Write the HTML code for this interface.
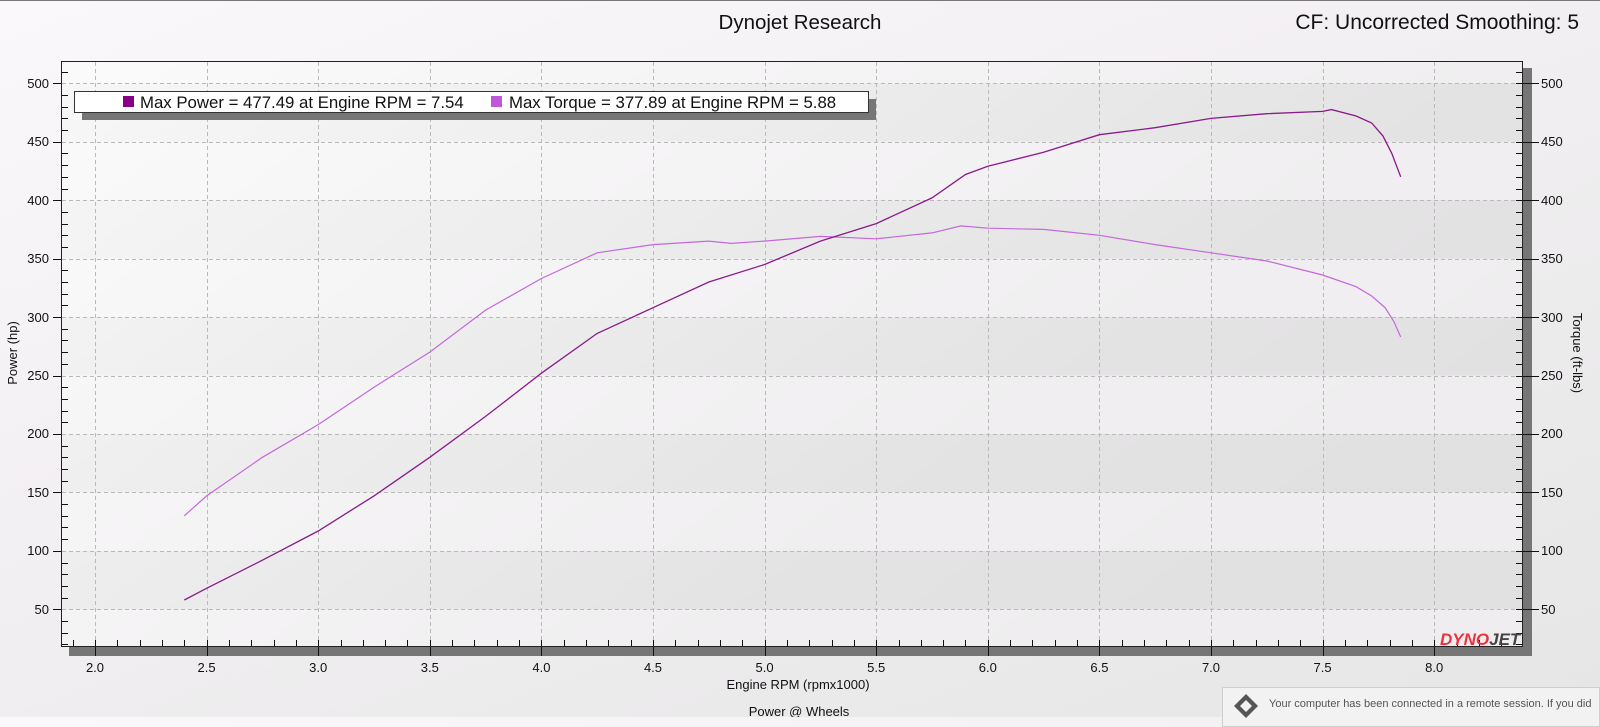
<!DOCTYPE html>
<html><head><meta charset="utf-8"><style>
html,body{margin:0;padding:0;width:1600px;height:717px;overflow:hidden;font-family:"Liberation Sans",sans-serif;}
body{background:linear-gradient(160deg,#faf8fa 0%,#f3f0f3 40%,#ecebec 70%,#e6e6e6 100%);}
svg{position:absolute;left:0;top:0;}
text{font-family:"Liberation Sans",sans-serif;fill:#111;}
.note{position:absolute;left:1222px;top:687px;width:378px;height:40px;background:#f2f2f2;border:1px solid #cfcfcf;box-sizing:border-box;}
.note span{position:absolute;left:46px;top:10px;font-size:11px;color:#555;white-space:nowrap;}
</style></head><body>
<svg width="1600" height="717" viewBox="0 0 1600 717" xmlns="http://www.w3.org/2000/svg">
<defs>
<linearGradient id="dg" x1="0" y1="0" x2="1" y2="0.55">
<stop offset="0" stop-color="#ffffff" stop-opacity="0.75"/>
<stop offset="0.45" stop-color="#ffffff" stop-opacity="0.35"/>
<stop offset="0.75" stop-color="#ffffff" stop-opacity="0.08"/>
<stop offset="1" stop-color="#ffffff" stop-opacity="0"/>
</linearGradient>
</defs>
<line x1="0" y1="0.5" x2="1600" y2="0.5" stroke="#777" stroke-width="1"/>
<rect x="69" y="647" width="1463" height="9" fill="#767676"/>
<rect x="1523" y="68" width="9" height="588" fill="#767676"/>
<rect x="61" y="61" width="1462" height="586" fill="#efedef"/>
<g id="bands" fill="#e2e1e2"></g>
<rect x="61" y="61" width="1462" height="586" fill="url(#dg)"/>
<g id="grid" stroke="#b9b9b9" stroke-width="1" stroke-dasharray="4,3"></g>
<g id="ticks" stroke="#111" stroke-width="1"></g>
<rect x="61.5" y="61.5" width="1461" height="585" fill="none" stroke="#222" stroke-width="1"/>
<rect x="82" y="99" width="794" height="21" fill="#767676"/>
<rect x="74.5" y="91.5" width="794" height="21" fill="#fff" stroke="#333"/>
<rect x="123" y="96" width="11" height="11" fill="#880088"/>
<text x="140" y="108" font-size="16.8">Max Power = 477.49 at Engine RPM = 7.54</text>
<rect x="491" y="96" width="11" height="11" fill="#c056d8"/>
<text x="509" y="108" font-size="16.8">Max Torque = 377.89 at Engine RPM = 5.88</text>
<polyline id="tq" fill="none" stroke="#c468dc" stroke-width="1.2"/>
<polyline id="pw" fill="none" stroke="#8a1a8a" stroke-width="1.3"/>
<text x="800" y="29" font-size="20.5" text-anchor="middle">Dynojet Research</text>
<text x="1579" y="29" font-size="21" text-anchor="end">CF: Uncorrected Smoothing: 5</text>
<g font-size="13" text-anchor="end">
<text x="49" y="88">500</text><text x="49" y="146">450</text><text x="49" y="205">400</text><text x="49" y="263">350</text><text x="49" y="322">300</text><text x="49" y="380">250</text><text x="49" y="438">200</text><text x="49" y="497">150</text><text x="49" y="555">100</text><text x="49" y="614">50</text>
</g>
<g font-size="13">
<text x="1541" y="88">500</text><text x="1541" y="146">450</text><text x="1541" y="205">400</text><text x="1541" y="263">350</text><text x="1541" y="322">300</text><text x="1541" y="380">250</text><text x="1541" y="438">200</text><text x="1541" y="497">150</text><text x="1541" y="555">100</text><text x="1541" y="614">50</text>
</g>
<g font-size="13" text-anchor="middle">
<text x="95" y="672">2.0</text><text x="206.6" y="672">2.5</text><text x="318.2" y="672">3.0</text><text x="429.8" y="672">3.5</text><text x="541.4" y="672">4.0</text><text x="653" y="672">4.5</text><text x="764.6" y="672">5.0</text><text x="876.2" y="672">5.5</text><text x="987.8" y="672">6.0</text><text x="1099.4" y="672">6.5</text><text x="1211" y="672">7.0</text><text x="1322.6" y="672">7.5</text><text x="1434.2" y="672">8.0</text>
<text x="798" y="689">Engine RPM (rpmx1000)</text>
<text x="799" y="716">Power @ Wheels</text>
</g>
<text transform="translate(17,353) rotate(-90)" font-size="13" text-anchor="middle">Power (hp)</text>
<text transform="translate(1573,353) rotate(90)" font-size="13" text-anchor="middle">Torque (ft-lbs)</text>
<text x="1440" y="645" font-size="17" font-weight="bold" font-style="italic" style="fill:#e8343f">DYNO<tspan style="fill:#444">JET</tspan></text>
</svg>
<div class="note"><svg width="30" height="30" style="left:8px;top:4px;position:absolute"><path d="M15 2 L27 14 L15 26 L3 14 Z M15 8 L21 14 L15 20 L9 14 Z" fill="#555" fill-rule="evenodd"/></svg><span>Your computer has been connected in a remote session. If you did</span></div>
<script>
var NS="http://www.w3.org/2000/svg";
function X(r){return 95+(r-2)*223.2;}
function Y(v){return 83.3+(500-v)*1.1689;}
function el(p,t,a){var e=document.createElementNS(NS,t);for(var k in a)e.setAttribute(k,a[k]);p.appendChild(e);return e;}
var bands=document.getElementById('bands');
[500,400,300,200,100].forEach(function(v){el(bands,'rect',{x:62,y:Y(v),width:1460,height:Y(v-50)-Y(v)});});
var g=document.getElementById('grid');
for(var v=50;v<=500;v+=50){el(g,'line',{x1:62,x2:1522,y1:Math.round(Y(v))+.5,y2:Math.round(Y(v))+.5});}
for(var r=2;r<=8.01;r+=0.5){var x=Math.round(X(r))+.5;el(g,'line',{x1:x,x2:x,y1:62,y2:646});}
var t=document.getElementById('ticks');
for(var v=20;v<=520;v+=10){var y=Math.round(Y(v))+.5;if(y<62||y>646)continue;
 if(v%50==0){el(t,'line',{x1:53,x2:61,y1:y,y2:y});el(t,'line',{x1:1516,x2:1539,y1:y,y2:y});}
 else{el(t,'line',{x1:61,x2:68,y1:y,y2:y});el(t,'line',{x1:1516,x2:1523,y1:y,y2:y});}}
for(var i=19;i<=84;i++){var r=i/10,x=Math.round(X(r))+.5;if(x<62||x>1522)continue;
 if(i%5==0){el(t,'line',{x1:x,x2:x,y1:640,y2:656});}else{el(t,'line',{x1:x,x2:x,y1:640,y2:647});}}
var P=[[2.4,58],[2.5,68],[2.75,92],[3.0,117],[3.25,147],[3.5,180],[3.75,215],[4.0,252],[4.25,286],[4.5,308],[4.75,330],[5.0,345],[5.25,365],[5.5,380],[5.75,402],[5.9,422],[6.0,429],[6.25,441],[6.5,456],[6.75,462],[7.0,470],[7.25,474],[7.5,476],[7.54,477.5],[7.65,472],[7.72,466],[7.77,455],[7.81,440],[7.85,420]];
var T=[[2.4,130],[2.5,147],[2.75,180],[3.0,208],[3.25,240],[3.5,270],[3.75,306],[4.0,333],[4.25,355],[4.5,362],[4.75,365],[4.85,363],[5.0,365],[5.25,369],[5.5,367],[5.75,372],[5.88,378],[6.0,376],[6.25,375],[6.5,370],[6.75,362],[7.0,355],[7.25,348],[7.5,336],[7.65,326],[7.72,318],[7.78,308],[7.82,296],[7.85,283]];
function pts(a){return a.map(function(p){return X(p[0]).toFixed(1)+','+Y(p[1]).toFixed(1);}).join(' ');}
document.getElementById('pw').setAttribute('points',pts(P));
document.getElementById('tq').setAttribute('points',pts(T));
</script>
</body></html>
